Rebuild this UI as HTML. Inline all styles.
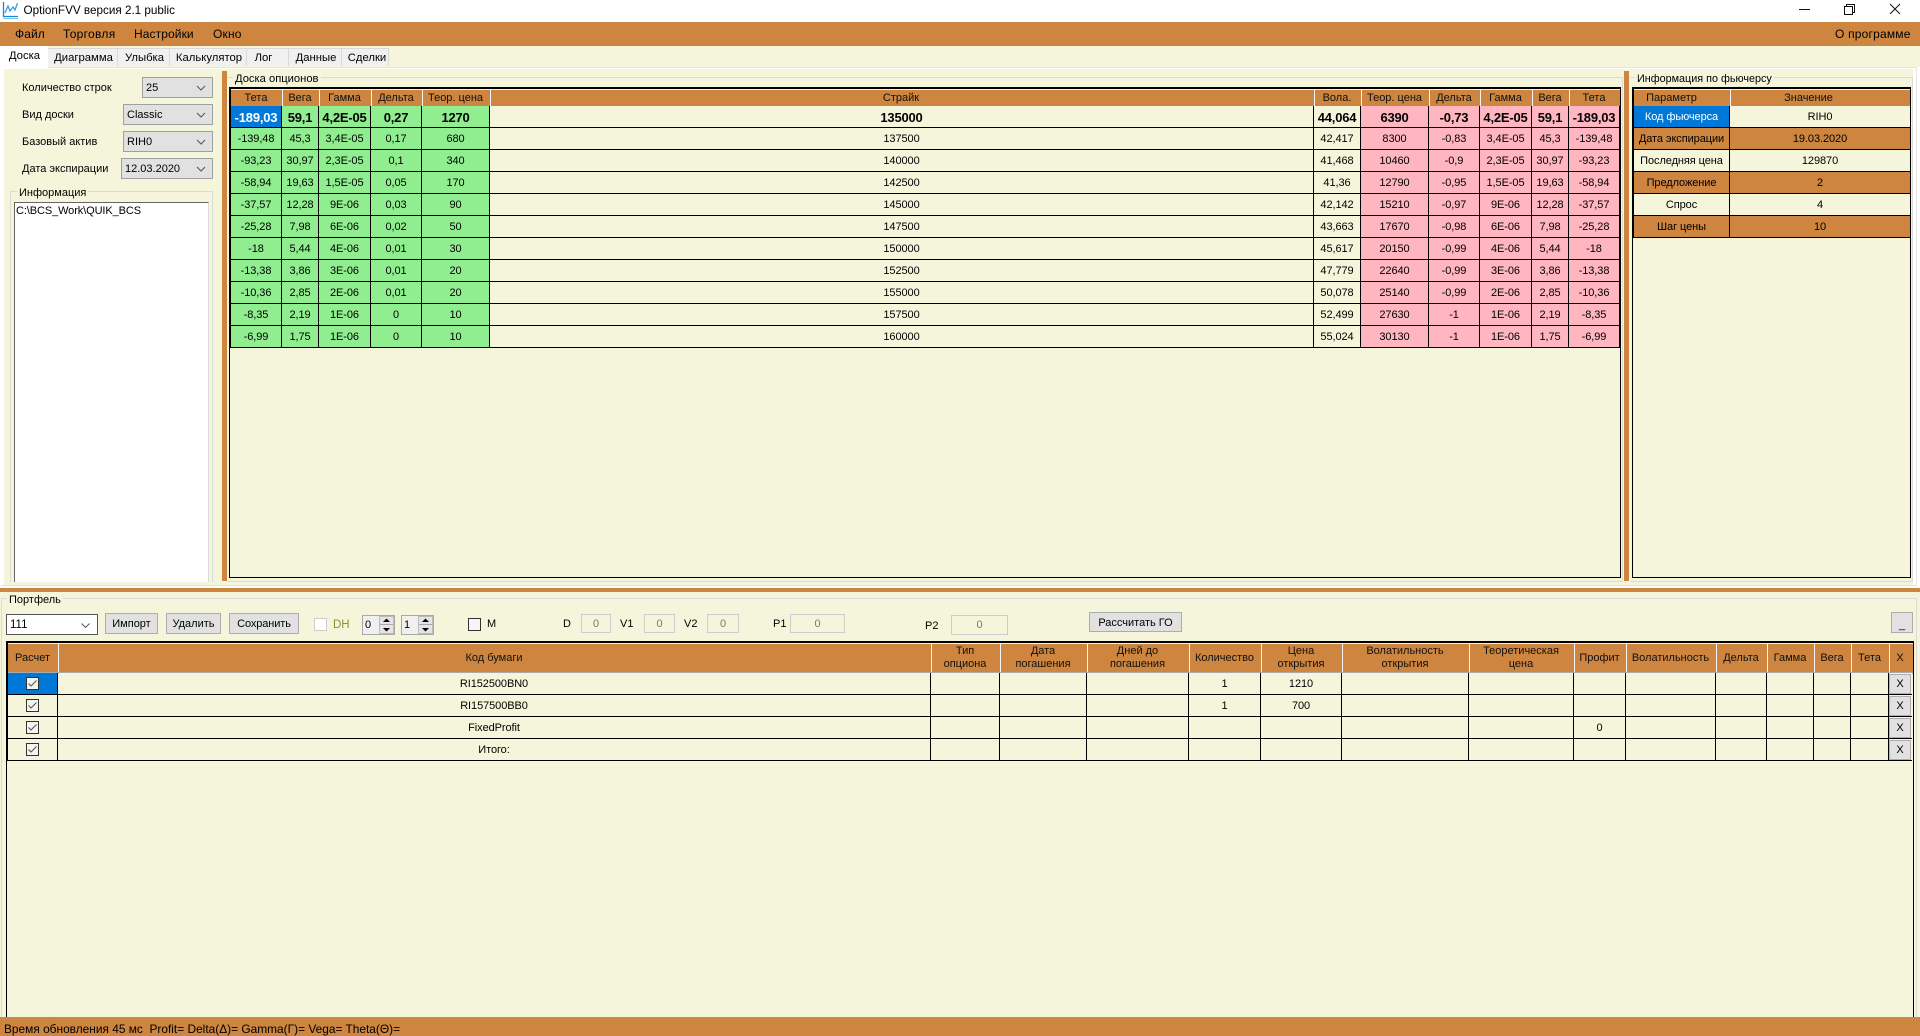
<!DOCTYPE html>
<html lang="ru"><head><meta charset="utf-8"><title>OptionFVV</title>
<style>
html,body{margin:0;padding:0;width:1920px;height:1036px;overflow:hidden;background:#fff}
body{position:relative;font-family:"Liberation Sans",sans-serif;font-size:11px;color:#000}
.a{position:absolute;white-space:nowrap;line-height:14px}
.b{position:absolute;box-sizing:border-box}
.tab{position:absolute;top:48px;height:18px;box-sizing:border-box;background:#f0f0f0;border:1px solid #d9d9d9;border-bottom:0;border-left:0;text-align:center;line-height:19px;font-size:11.3px;padding-left:2px}
.cb{position:absolute;box-sizing:border-box;background:#e1e1e1;border:1px solid #a0a0a0;outline:0;font-size:11px;line-height:21px;padding-left:3px}
.cb svg{position:absolute;right:6px;top:7px}
.btn{position:absolute;box-sizing:border-box;background:#e1e1e1;border:1px solid #adadad;text-align:center;line-height:21px;font-size:11px}
.in{position:absolute;box-sizing:border-box;background:#f5f5dc;border:1px solid #ccc;text-align:center;line-height:19px;color:#777;font-size:11px}
.gl{position:absolute;background:#dcdcd4}
.l{font-size:11px}
table{position:absolute;border-collapse:separate;border-spacing:0;table-layout:fixed}
td,th{box-sizing:border-box;padding:0;text-align:center;font-weight:normal;font-size:11px;overflow:hidden;white-space:nowrap}
.r td{height:22px;padding-top:2px;line-height:19px;letter-spacing:-.08px;border-right:1px solid #000;border-bottom:1px solid #000;background:#f5f5dc}
.h th{height:16px;padding:1px 2px 0 0;line-height:15px;background:#cd853f;border-right:1px solid #f5f5f5;color:#111}
.r td.p{background:#ffb6c1}.r td.g{background:#90ee90}
.r tr.f td{font-weight:bold;font-size:13px;letter-spacing:-.2px}
.r td.s{background:#0078d7;color:#fff}
.r td.o{background:#cd853f}
.r td.n{border-right:0}
.r td.z{padding:0}
.h2 th{height:28px;line-height:13px;padding-right:2px;white-space:nowrap;background:#cd853f;border-right:1px solid #f5f5f5;color:#111}
.ck{display:block;margin:0 auto;width:13px;height:13px}
.x{display:block;box-sizing:border-box;width:22px;height:20px;background:#e1e1e1;border:1px solid #adadad;line-height:18px;margin:0 auto 0 0}
</style></head><body>

<!-- title bar -->
<svg class="b" style="left:2px;top:1px" width="17" height="18" viewBox="0 0 17 18"><path d="M1.500 1V15.500H16" fill="none" stroke="#1a86d8" stroke-width="1.300"/><path d="M3 12L6 5L8 10L11 6L13 9L15.500 2" fill="none" stroke="#2a9ae8" stroke-width="1.200"/><path d="M1 17.500H16" stroke="#7cc4f0" stroke-width="1"/></svg>
<div class="a" style="left:23.500px;top:4px;font-size:11.700px">OptionFVV версия 2.1 public</div>
<svg class="b" style="left:1795px;top:0" width="120" height="20" viewBox="0 0 120 20"><path d="M4 9.500H15" stroke="#111" stroke-width="1"/><path d="M49.500 6.500H57.500V14.500H49.500ZM51.500 6.500V4.500H59.500V12.500H57.500" fill="none" stroke="#111" stroke-width="1"/><path d="M95 4L105 14M105 4L95 14" stroke="#111" stroke-width="1"/></svg>

<!-- menu -->
<div class="b" style="left:0;top:22px;width:1920px;height:24px;background:#cd853f"></div>
<div class="a" style="left:15px;top:27px;font-size:12px;letter-spacing:.1px">Файл</div>
<div class="a" style="left:63px;top:27px;font-size:12px;letter-spacing:.3px">Торговля</div>
<div class="a" style="left:134px;top:27px;font-size:12px;letter-spacing:.1px">Настройки</div>
<div class="a" style="left:213px;top:27px;font-size:12px;letter-spacing:.2px">Окно</div>
<div class="a" style="left:1835px;top:27px;font-size:12px;letter-spacing:.2px">О программе</div>

<!-- tabs/page -->
<div class="b" style="left:0;top:46px;width:1920px;height:21px;background:#f5f5dc"></div>
<div class="b" style="left:0;top:46px;width:1px;height:22px;background:#fff"></div>
<div class="b" style="left:1px;top:67px;width:1916px;height:519px;background:#f5f5dc;border:1px solid #e4e4e4"></div>
<div class="b" style="left:1px;top:68px;width:3px;height:517px;background:#fff"></div>
<div class="b" style="left:1913px;top:68px;width:3px;height:517px;background:#fff"></div>
<div class="b" style="left:1px;top:68px;width:1915px;height:1px;background:#fff"></div>
<div class="b" style="left:4px;top:69px;width:1909px;height:516px;background:#f5f5dc"></div>
<div class="tab" style="left:48px;width:70px">Диаграмма</div>
<div class="tab" style="left:118px;width:52px">Улыбка</div>
<div class="tab" style="left:170px;width:77px">Калькулятор</div>
<div class="tab" style="left:247px;width:42px;padding-left:0;padding-right:8px">Лог</div>
<div class="tab" style="left:289px;width:53px">Данные</div>
<div class="tab" style="left:342px;width:47px;padding-left:4px">Сделки</div>
<div class="b" style="left:1px;top:46px;width:47px;height:23px;background:#fff;text-align:center;line-height:20px;font-size:11.300px">Доска</div>

<!-- left panel -->
<div class="a l" style="left:22px;top:81px">Количество строк</div>
<div class="a l" style="left:22px;top:108px">Вид доски</div>
<div class="a l" style="left:22px;top:135px">Базовый актив</div>
<div class="a l" style="left:22px;top:162px">Дата экспирации</div>
<div class="cb" style="left:142px;top:77px;width:71px;height:21px">25<svg width="10" height="6"><path d="M1 1L5 5L9 1" fill="none" stroke="#555"/></svg></div>
<div class="cb" style="left:123px;top:104px;width:90px;height:21px">Classic<svg width="10" height="6"><path d="M1 1L5 5L9 1" fill="none" stroke="#555"/></svg></div>
<div class="cb" style="left:123px;top:131px;width:90px;height:21px">RIH0<svg width="10" height="6"><path d="M1 1L5 5L9 1" fill="none" stroke="#555"/></svg></div>
<div class="cb" style="left:121px;top:158px;width:92px;height:21px">12.03.2020<svg width="10" height="6"><path d="M1 1L5 5L9 1" fill="none" stroke="#555"/></svg></div>
<div class="gl" style="left:10px;top:191px;width:203px;height:1px"></div>
<div class="gl" style="left:10px;top:191px;width:1px;height:391px"></div>
<div class="gl" style="left:212px;top:191px;width:1px;height:391px"></div>
<div class="a l" style="left:17px;top:186px;padding:0 2px;background:#f5f5dc">Информация</div>
<div class="b" style="left:14px;top:202px;width:195px;height:380px;background:#fff;border-top:1px solid #666;border-left:1px solid #666;border-right:1px solid #ddd"></div>
<div class="a" style="left:16px;top:204px;font-size:11px;letter-spacing:-.1px">C:\BCS_Work\QUIK_BCS</div>

<!-- splitters -->
<div class="b" style="left:222px;top:71px;width:5px;height:510px;background:#cd853f"></div>
<div class="b" style="left:1624px;top:71px;width:5px;height:510px;background:#cd853f"></div>

<!-- main group -->
<div class="gl" style="left:227px;top:77px;width:1395px;height:1px"></div>
<div class="gl" style="left:1622px;top:77px;width:1px;height:505px"></div>
<div class="gl" style="left:227px;top:581px;width:1395px;height:1px"></div>
<div class="a" style="left:233px;top:72px;padding:0 2px;background:#f5f5dc;font-size:11.200px">Доска опционов</div>
<div class="b" style="left:229px;top:87px;width:1392px;height:491px;background:#f5f5dc;border:1px solid #000"></div>
<div class="b" style="left:229px;top:88px;width:1392px;height:1px;background:#000"></div>
<div class="b" style="left:230px;top:88px;width:1px;height:260px;background:#000"></div>
<div class="b" style="left:231px;top:90px;width:1389px;height:16px;background:#cd853f"></div>
<table class="h" style="left:232px;top:90px;width:1388px">
<colgroup><col style="width:51px"><col style="width:37px"><col style="width:52px"><col style="width:51px"><col style="width:68px"><col style="width:824px"><col style="width:47px"><col style="width:68px"><col style="width:51px"><col style="width:52px"><col style="width:37px"><col style="width:50px"></colgroup>
<tr><th>Тета</th><th>Вега</th><th>Гамма</th><th>Дельта</th><th>Теор. цена</th><th style="padding-right:3px">Страйк</th><th>Вола.</th><th>Теор. цена</th><th>Дельта</th><th>Гамма</th><th>Вега</th><th style="border:0">Тета</th></tr></table>
<table class="r" style="left:231px;top:106px;width:1389px">
<colgroup><col style="width:51px"><col style="width:37px"><col style="width:52px"><col style="width:51px"><col style="width:68px"><col style="width:824px"><col style="width:47px"><col style="width:68px"><col style="width:51px"><col style="width:52px"><col style="width:37px"><col style="width:51px"></colgroup>
<tr class="f"><td class="s">-189,03</td><td class="g">59,1</td><td class="g">4,2E-05</td><td class="g">0,27</td><td class="g">1270</td><td>135000</td><td>44,064</td><td class="p">6390</td><td class="p">-0,73</td><td class="p">4,2E-05</td><td class="p">59,1</td><td class="p">-189,03</td></tr>
<tr><td class="g">-139,48</td><td class="g">45,3</td><td class="g">3,4E-05</td><td class="g">0,17</td><td class="g">680</td><td>137500</td><td>42,417</td><td class="p">8300</td><td class="p">-0,83</td><td class="p">3,4E-05</td><td class="p">45,3</td><td class="p">-139,48</td></tr>
<tr><td class="g">-93,23</td><td class="g">30,97</td><td class="g">2,3E-05</td><td class="g">0,1</td><td class="g">340</td><td>140000</td><td>41,468</td><td class="p">10460</td><td class="p">-0,9</td><td class="p">2,3E-05</td><td class="p">30,97</td><td class="p">-93,23</td></tr>
<tr><td class="g">-58,94</td><td class="g">19,63</td><td class="g">1,5E-05</td><td class="g">0,05</td><td class="g">170</td><td>142500</td><td>41,36</td><td class="p">12790</td><td class="p">-0,95</td><td class="p">1,5E-05</td><td class="p">19,63</td><td class="p">-58,94</td></tr>
<tr><td class="g">-37,57</td><td class="g">12,28</td><td class="g">9E-06</td><td class="g">0,03</td><td class="g">90</td><td>145000</td><td>42,142</td><td class="p">15210</td><td class="p">-0,97</td><td class="p">9E-06</td><td class="p">12,28</td><td class="p">-37,57</td></tr>
<tr><td class="g">-25,28</td><td class="g">7,98</td><td class="g">6E-06</td><td class="g">0,02</td><td class="g">50</td><td>147500</td><td>43,663</td><td class="p">17670</td><td class="p">-0,98</td><td class="p">6E-06</td><td class="p">7,98</td><td class="p">-25,28</td></tr>
<tr><td class="g">-18</td><td class="g">5,44</td><td class="g">4E-06</td><td class="g">0,01</td><td class="g">30</td><td>150000</td><td>45,617</td><td class="p">20150</td><td class="p">-0,99</td><td class="p">4E-06</td><td class="p">5,44</td><td class="p">-18</td></tr>
<tr><td class="g">-13,38</td><td class="g">3,86</td><td class="g">3E-06</td><td class="g">0,01</td><td class="g">20</td><td>152500</td><td>47,779</td><td class="p">22640</td><td class="p">-0,99</td><td class="p">3E-06</td><td class="p">3,86</td><td class="p">-13,38</td></tr>
<tr><td class="g">-10,36</td><td class="g">2,85</td><td class="g">2E-06</td><td class="g">0,01</td><td class="g">20</td><td>155000</td><td>50,078</td><td class="p">25140</td><td class="p">-0,99</td><td class="p">2E-06</td><td class="p">2,85</td><td class="p">-10,36</td></tr>
<tr><td class="g">-8,35</td><td class="g">2,19</td><td class="g">1E-06</td><td class="g">0</td><td class="g">10</td><td>157500</td><td>52,499</td><td class="p">27630</td><td class="p">-1</td><td class="p">1E-06</td><td class="p">2,19</td><td class="p">-8,35</td></tr>
<tr><td class="g">-6,99</td><td class="g">1,75</td><td class="g">1E-06</td><td class="g">0</td><td class="g">10</td><td>160000</td><td>55,024</td><td class="p">30130</td><td class="p">-1</td><td class="p">1E-06</td><td class="p">1,75</td><td class="p">-6,99</td></tr>
</table>

<!-- right group -->
<div class="gl" style="left:1630px;top:77px;width:283px;height:1px"></div>
<div class="gl" style="left:1912px;top:77px;width:1px;height:505px"></div>
<div class="gl" style="left:1630px;top:581px;width:283px;height:1px"></div>
<div class="a" style="left:1635px;top:72px;padding:0 2px;background:#f5f5dc;font-size:10.800px">Информация по фьючерсу</div>
<div class="b" style="left:1632px;top:87px;width:279px;height:491px;background:#f5f5dc;border:1px solid #000"></div>
<div class="b" style="left:1632px;top:88px;width:279px;height:1px;background:#000"></div>
<div class="b" style="left:1633px;top:88px;width:1px;height:150px;background:#000"></div>
<div class="b" style="left:1634px;top:90px;width:276px;height:16px;background:#cd853f"></div>
<table class="h" style="left:1635px;top:90px;width:275px">
<colgroup><col style="width:96px"><col style="width:179px"></colgroup>
<tr><th style="padding-right:22px">Параметр</th><th style="border:0;padding-right:24px">Значение</th></tr></table>
<table class="r" style="left:1634px;top:106px;width:276px">
<colgroup><col style="width:96px"><col style="width:180px"></colgroup>
<tr><td class="s">Код фьючерса</td><td class="n">RIH0</td></tr>
<tr><td class="o">Дата экспирации</td><td class="o n">19.03.2020</td></tr>
<tr><td>Последняя цена</td><td class="n">129870</td></tr>
<tr><td class="o">Предложение</td><td class="o n">2</td></tr>
<tr><td>Спрос</td><td class="n">4</td></tr>
<tr><td class="o">Шаг цены</td><td class="o n">10</td></tr>
</table>

<!-- horizontal splitter + bottom -->
<div class="b" style="left:0;top:586px;width:1920px;height:2px;background:#fff"></div>
<div class="b" style="left:0;top:588px;width:1920px;height:4px;background:#cd853f"></div>
<div class="b" style="left:0;top:592px;width:1920px;height:425px;background:#f5f5dc"></div>
<div class="gl" style="left:1px;top:598px;width:1916px;height:1px"></div>
<div class="gl" style="left:1px;top:598px;width:1px;height:419px"></div>
<div class="gl" style="left:1916px;top:598px;width:1px;height:419px"></div>
<div class="a l" style="left:7px;top:593px;padding:0 2px;background:#f5f5dc">Портфель</div>

<div class="b" style="left:6px;top:614px;width:92px;height:21px;background:#fff;border:1px solid #555;font-size:11.500px;line-height:20px;padding-left:3px">111<svg style="position:absolute;right:7px;top:8px" width="9" height="5"><path d="M0.500 0.500L4.500 4.500L8.500 0.500" fill="none" stroke="#555"/></svg></div>
<div class="btn" style="left:105px;top:613px;width:53px;height:21px">Импорт</div>
<div class="btn" style="left:166px;top:613px;width:55px;height:21px">Удалить</div>
<div class="btn" style="left:229px;top:613px;width:70px;height:21px;letter-spacing:-.1px">Сохранить</div>
<div class="b" style="left:314px;top:618px;width:13px;height:13px;background:#fff;border:1px solid #ccc"></div>
<div class="a" style="left:333px;top:618px;color:#8f8f30;font-size:11.500px">DH</div>
<div class="b" style="left:362px;top:615px;width:33px;height:20px;background:#f0f0f0;border:1px solid #a9a9a9"></div>
<div class="a" style="left:365px;top:618px;font-size:11px">0</div>
<div class="b" style="left:379px;top:616px;width:15px;height:18px;background:#e4e4e4;border:1px solid #bbb"></div>
<div class="b" style="left:380px;top:624px;width:13px;height:1px;background:#aaa"></div>
<svg class="b" style="left:382px;top:618px" width="9" height="15"><path d="M1 4H8L4.500 0.500ZM1 10H8L4.500 13.500Z" fill="#000"/></svg>
<div class="b" style="left:401px;top:615px;width:33px;height:20px;background:#f0f0f0;border:1px solid #a9a9a9"></div>
<div class="a" style="left:404px;top:618px;font-size:11px">1</div>
<div class="b" style="left:418px;top:616px;width:15px;height:18px;background:#e4e4e4;border:1px solid #bbb"></div>
<div class="b" style="left:419px;top:624px;width:13px;height:1px;background:#aaa"></div>
<svg class="b" style="left:421px;top:618px" width="9" height="15"><path d="M1 4H8L4.500 0.500ZM1 10H8L4.500 13.500Z" fill="#000"/></svg>
<div class="b" style="left:468px;top:618px;width:13px;height:13px;background:#f5f5f5;border:1px solid #333"></div>
<div class="a" style="left:487px;top:617px;font-size:11px">M</div>
<div class="a" style="left:563px;top:617px">D</div>
<div class="in" style="left:581px;top:614px;width:30px;height:19px">0</div>
<div class="a" style="left:620px;top:617px">V1</div>
<div class="in" style="left:644px;top:614px;width:31px;height:19px">0</div>
<div class="a" style="left:684px;top:617px">V2</div>
<div class="in" style="left:707px;top:614px;width:32px;height:19px">0</div>
<div class="a" style="left:773px;top:617px">P1</div>
<div class="in" style="left:790px;top:614px;width:55px;height:19px">0</div>
<div class="a" style="left:925px;top:619px">P2</div>
<div class="in" style="left:951px;top:615px;width:57px;height:20px">0</div>
<div class="btn" style="left:1089px;top:612px;width:93px;height:20px;line-height:20px">Рассчитать ГО</div>
<div class="btn" style="left:1891px;top:612px;width:22px;height:21px;line-height:24px">_</div>

<!-- portfolio grid -->
<div class="b" style="left:6px;top:641px;width:1908px;height:376px;background:#f5f5dc;border:1px solid #000;border-bottom:0"></div>
<div class="b" style="left:6px;top:642px;width:1908px;height:1px;background:#000"></div>
<div class="b" style="left:7px;top:642px;width:1px;height:119px;background:#000"></div>
<div class="b" style="left:8px;top:644px;width:1905px;height:28px;background:#cd853f"></div>
<div class="b" style="left:8px;top:672px;width:1905px;height:2px;background:#aaa"></div>
<table class="h2" style="left:9px;top:644px;width:1903px">
<colgroup><col style="width:50px"><col style="width:873px"><col style="width:69px"><col style="width:87px"><col style="width:102px"><col style="width:72px"><col style="width:81px"><col style="width:127px"><col style="width:105px"><col style="width:52px"><col style="width:90px"><col style="width:51px"><col style="width:47px"><col style="width:37px"><col style="width:38px"><col style="width:22px"></colgroup>
<tr><th>Расчет</th><th>Код бумаги</th><th>Тип<br>опциона</th><th>Дата<br>погашения</th><th>Дней до<br>погашения</th><th>Количество</th><th>Цена<br>открытия</th><th>Волатильность<br>открытия</th><th>Теоретическая<br>цена</th><th>Профит</th><th>Волатильность</th><th>Дельта</th><th>Гамма</th><th>Вега</th><th>Тета</th><th style="border:0">X</th></tr></table>
<table class="r" style="left:8px;top:673px;width:1904px">
<colgroup><col style="width:50px"><col style="width:873px"><col style="width:69px"><col style="width:87px"><col style="width:102px"><col style="width:72px"><col style="width:81px"><col style="width:127px"><col style="width:105px"><col style="width:52px"><col style="width:90px"><col style="width:51px"><col style="width:47px"><col style="width:37px"><col style="width:38px"><col style="width:23px"></colgroup>
<tr><td class="s z"><svg class="ck" viewBox="0 0 13 13"><rect x=".5" y=".5" width="12" height="12" fill="#f5f5f0" stroke="#333"/><path d="M2.500 6.500L5 9L10.500 3.500" fill="none" stroke="#555" stroke-width="1.100"/></svg></td><td>RI152500BN0</td><td></td><td></td><td></td><td>1</td><td>1210</td><td></td><td></td><td></td><td></td><td></td><td></td><td></td><td></td><td class="n z"><span class="x">X</span></td></tr>
<tr><td class="z"><svg class="ck" viewBox="0 0 13 13"><rect x=".5" y=".5" width="12" height="12" fill="#f5f5f0" stroke="#333"/><path d="M2.500 6.500L5 9L10.500 3.500" fill="none" stroke="#555" stroke-width="1.100"/></svg></td><td>RI157500BB0</td><td></td><td></td><td></td><td>1</td><td>700</td><td></td><td></td><td></td><td></td><td></td><td></td><td></td><td></td><td class="n z"><span class="x">X</span></td></tr>
<tr><td class="z"><svg class="ck" viewBox="0 0 13 13"><rect x=".5" y=".5" width="12" height="12" fill="#f5f5f0" stroke="#333"/><path d="M2.500 6.500L5 9L10.500 3.500" fill="none" stroke="#555" stroke-width="1.100"/></svg></td><td>FixedProfit</td><td></td><td></td><td></td><td></td><td></td><td></td><td></td><td>0</td><td></td><td></td><td></td><td></td><td></td><td class="n z"><span class="x">X</span></td></tr>
<tr><td class="z"><svg class="ck" viewBox="0 0 13 13"><rect x=".5" y=".5" width="12" height="12" fill="#f5f5f0" stroke="#333"/><path d="M2.500 6.500L5 9L10.500 3.500" fill="none" stroke="#555" stroke-width="1.100"/></svg></td><td>Итого:</td><td></td><td></td><td></td><td></td><td></td><td></td><td></td><td></td><td></td><td></td><td></td><td></td><td></td><td class="n z"><span class="x">X</span></td></tr>
</table>

<!-- status -->
<div class="b" style="left:0;top:1017px;width:1920px;height:19px;background:#cd853f"></div>
<div class="a" style="left:4px;top:1022px;font-size:11.900px">Время обновления 45 мс&nbsp; Profit= Delta(Δ)= Gamma(Γ)= Vega= Theta(Θ)=</div>
</body></html>
